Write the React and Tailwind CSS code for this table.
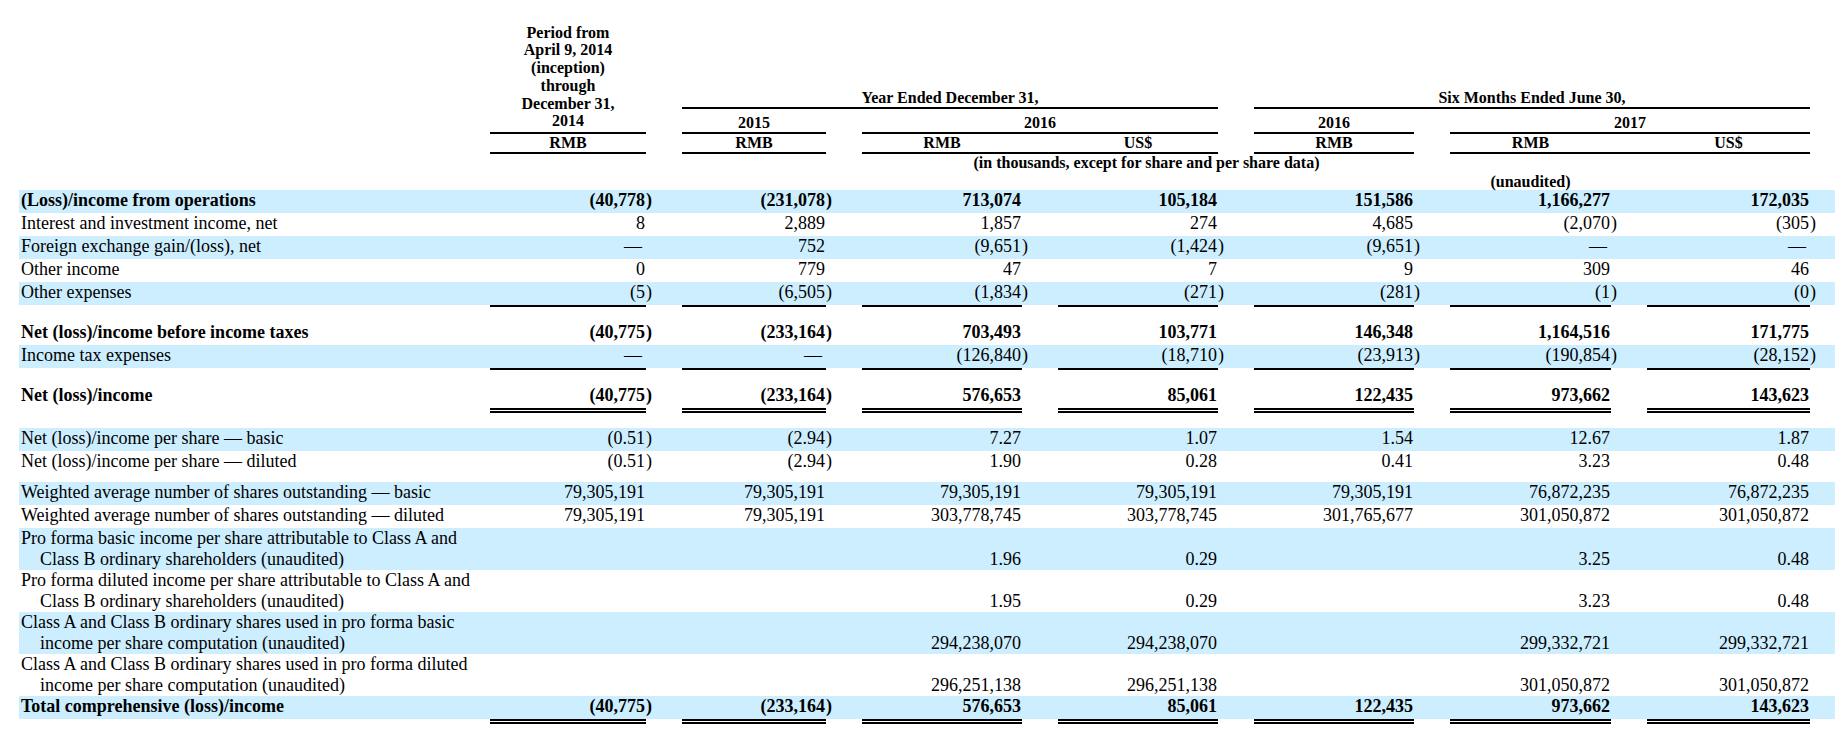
import React from "react";

const COLS =
  "grid grid-cols-[471px_156px_36px_144px_36px_160px_36px_160px_36px_160px_36px_161px_36px_163px_20px]";

const rows = [
  { label: "(Loss)/income from operations", bold: true, blue: true, values: ["(40,778)", "(231,078)", "713,074", "105,184", "151,586", "1,166,277", "172,035"] },
  { label: "Interest and investment income, net", values: ["8", "2,889", "1,857", "274", "4,685", "(2,070)", "(305)"] },
  { label: "Foreign exchange gain/(loss), net", blue: true, values: ["—", "752", "(9,651)", "(1,424)", "(9,651)", "—", "—"] },
  { label: "Other income", values: ["0", "779", "47", "7", "9", "309", "46"] },
  { label: "Other expenses", blue: true, underline: "single", values: ["(5)", "(6,505)", "(1,834)", "(271)", "(281)", "(1)", "(0)"] },
  { spacer: "h-[15px]" },
  { label: "Net (loss)/income before income taxes", bold: true, values: ["(40,775)", "(233,164)", "703,493", "103,771", "146,348", "1,164,516", "171,775"] },
  { label: "Income tax expenses", blue: true, underline: "single", values: ["—", "—", "(126,840)", "(18,710)", "(23,913)", "(190,854)", "(28,152)"] },
  { spacer: "h-[15px]" },
  { label: "Net (loss)/income", bold: true, underline: "double", values: ["(40,775)", "(233,164)", "576,653", "85,061", "122,435", "973,662", "143,623"] },
  { spacer: "h-[15px]" },
  { label: "Net (loss)/income per share — basic", blue: true, values: ["(0.51)", "(2.94)", "7.27", "1.07", "1.54", "12.67", "1.87"] },
  { label: "Net (loss)/income per share — diluted", values: ["(0.51)", "(2.94)", "1.90", "0.28", "0.41", "3.23", "0.48"] },
  { spacer: "h-[8px]" },
  { label: "Weighted average number of shares outstanding — basic", blue: true, values: ["79,305,191", "79,305,191", "79,305,191", "79,305,191", "79,305,191", "76,872,235", "76,872,235"] },
  { label: "Weighted average number of shares outstanding — diluted", values: ["79,305,191", "79,305,191", "303,778,745", "303,778,745", "301,765,677", "301,050,872", "301,050,872"] },
  { label: "Pro forma basic income per share attributable to Class A and", label2: "Class B ordinary shareholders (unaudited)", blue: true, values: ["", "", "1.96", "0.29", "", "3.25", "0.48"] },
  { label: "Pro forma diluted income per share attributable to Class A and", label2: "Class B ordinary shareholders (unaudited)", values: ["", "", "1.95", "0.29", "", "3.23", "0.48"] },
  { label: "Class A and Class B ordinary shares used in pro forma basic", label2: "income per share computation (unaudited)", blue: true, values: ["", "", "294,238,070", "294,238,070", "", "299,332,721", "299,332,721"] },
  { label: "Class A and Class B ordinary shares used in pro forma diluted", label2: "income per share computation (unaudited)", values: ["", "", "296,251,138", "296,251,138", "", "301,050,872", "301,050,872"] },
  { label: "Total comprehensive (loss)/income", bold: true, blue: true, underline: "double", values: ["(40,775)", "(233,164)", "576,653", "85,061", "122,435", "973,662", "143,623"] },
];

function Underline({ kind }) {
  const seg =
    kind === "double"
      ? "h-[5px] border-t-2 border-b-2 border-black"
      : "h-[2px] bg-black";
  const cells = [<div key="l" />];
  for (let i = 0; i < 7; i++) {
    cells.push(<div key={"u" + i} className={seg} />);
    cells.push(<div key={"g" + i} />);
  }
  return <div className={`${COLS} ${kind === "double" ? "h-[5px]" : "h-[2px]"}`}>{cells}</div>;
}

function Row({ r }) {
  const tall = !!r.label2;
  const cells = [
    <div key="label" className={`pl-[2px] whitespace-nowrap ${r.bold ? "font-bold" : ""}`}>
      <div>{r.label}</div>
      {r.label2 && <div className="pl-[19px]">{r.label2}</div>}
    </div>,
  ];
  r.values.forEach((v, i) => {
    const paren = v.endsWith(")");
    const val = paren ? v.slice(0, -1) : v;
    const dash = v === "—";
    cells.push(
      <div
        key={"v" + i}
        className={`flex justify-end whitespace-nowrap ${tall ? "items-end" : "items-start"} ${dash ? "pr-[4px]" : "pr-[1px]"} ${r.bold ? "font-bold" : ""}`}
      >
        {val}
      </div>
    );
    cells.push(
      <div key={"p" + i} className={`flex ${tall ? "items-end" : "items-start"} ${r.bold ? "font-bold" : ""}`}>
        {paren ? ")" : ""}
      </div>
    );
  });
  return (
    <div>
      <div className={`${COLS} ${r.blue ? "bg-[#cceeff]" : ""} ${tall ? "h-[42px]" : "h-[23px]"}`}>{cells}</div>
      {r.underline && <Underline kind={r.underline} />}
    </div>
  );
}

export default function App() {
  return (
    <div className="w-[1835px] min-h-[741px] bg-white text-black pt-[24px] pl-[19px] font-['Liberation_Serif','Times_New_Roman',serif] text-[18px] leading-[21px]">
      <div className={`${COLS} grid-rows-[85px_25px_20px] font-bold text-[16px] leading-[18px]`}>
        <div className="col-start-2 row-start-1 row-span-2 flex flex-col justify-end items-center text-center leading-[17.7px] border-b-2 border-black pb-[2px]">
          <div>Period from</div>
          <div>April 9, 2014</div>
          <div>(inception)</div>
          <div>through</div>
          <div>December 31,</div>
          <div>2014</div>
        </div>
        <div className="col-start-4 col-end-9 row-start-1 self-end text-center border-b-2 border-black">Year Ended December 31,</div>
        <div className="col-start-10 col-end-15 row-start-1 self-end text-center border-b-2 border-black">Six Months Ended June 30,</div>

        <div className="col-start-4 row-start-2 self-end text-center border-b-2 border-black">2015</div>
        <div className="col-start-6 col-end-9 row-start-2 self-end text-center border-b-2 border-black">2016</div>
        <div className="col-start-10 row-start-2 self-end text-center border-b-2 border-black">2016</div>
        <div className="col-start-12 col-end-15 row-start-2 self-end text-center border-b-2 border-black">2017</div>

        <div className="col-start-2 row-start-3 self-end text-center border-b-2 border-black">RMB</div>
        <div className="col-start-4 row-start-3 self-end text-center border-b-2 border-black">RMB</div>
        <div className="col-start-6 row-start-3 self-end text-center border-b-2 border-black">RMB</div>
        <div className="col-start-7 row-start-3 self-end h-[20px] border-b-2 border-black" />
        <div className="col-start-8 row-start-3 self-end text-center border-b-2 border-black">US$</div>
        <div className="col-start-10 row-start-3 self-end text-center border-b-2 border-black">RMB</div>
        <div className="col-start-12 row-start-3 self-end text-center border-b-2 border-black">RMB</div>
        <div className="col-start-13 row-start-3 self-end h-[20px] border-b-2 border-black" />
        <div className="col-start-14 row-start-3 self-end text-center border-b-2 border-black">US$</div>
      </div>

      <div className={`${COLS} h-[18px] font-bold text-[16px] leading-[18px]`}>
        <div className="col-start-4 col-end-13 text-center whitespace-nowrap">(in thousands, except for share and per share data)</div>
      </div>
      <div className={`${COLS} h-[18px] pt-[2px] font-bold text-[16px] leading-[16px]`}>
        <div className="col-start-12 text-center">(unaudited)</div>
      </div>

      {rows.map((r, i) =>
        r.spacer ? <div key={i} className={r.spacer} /> : <Row key={i} r={r} />
      )}
    </div>
  );
}
